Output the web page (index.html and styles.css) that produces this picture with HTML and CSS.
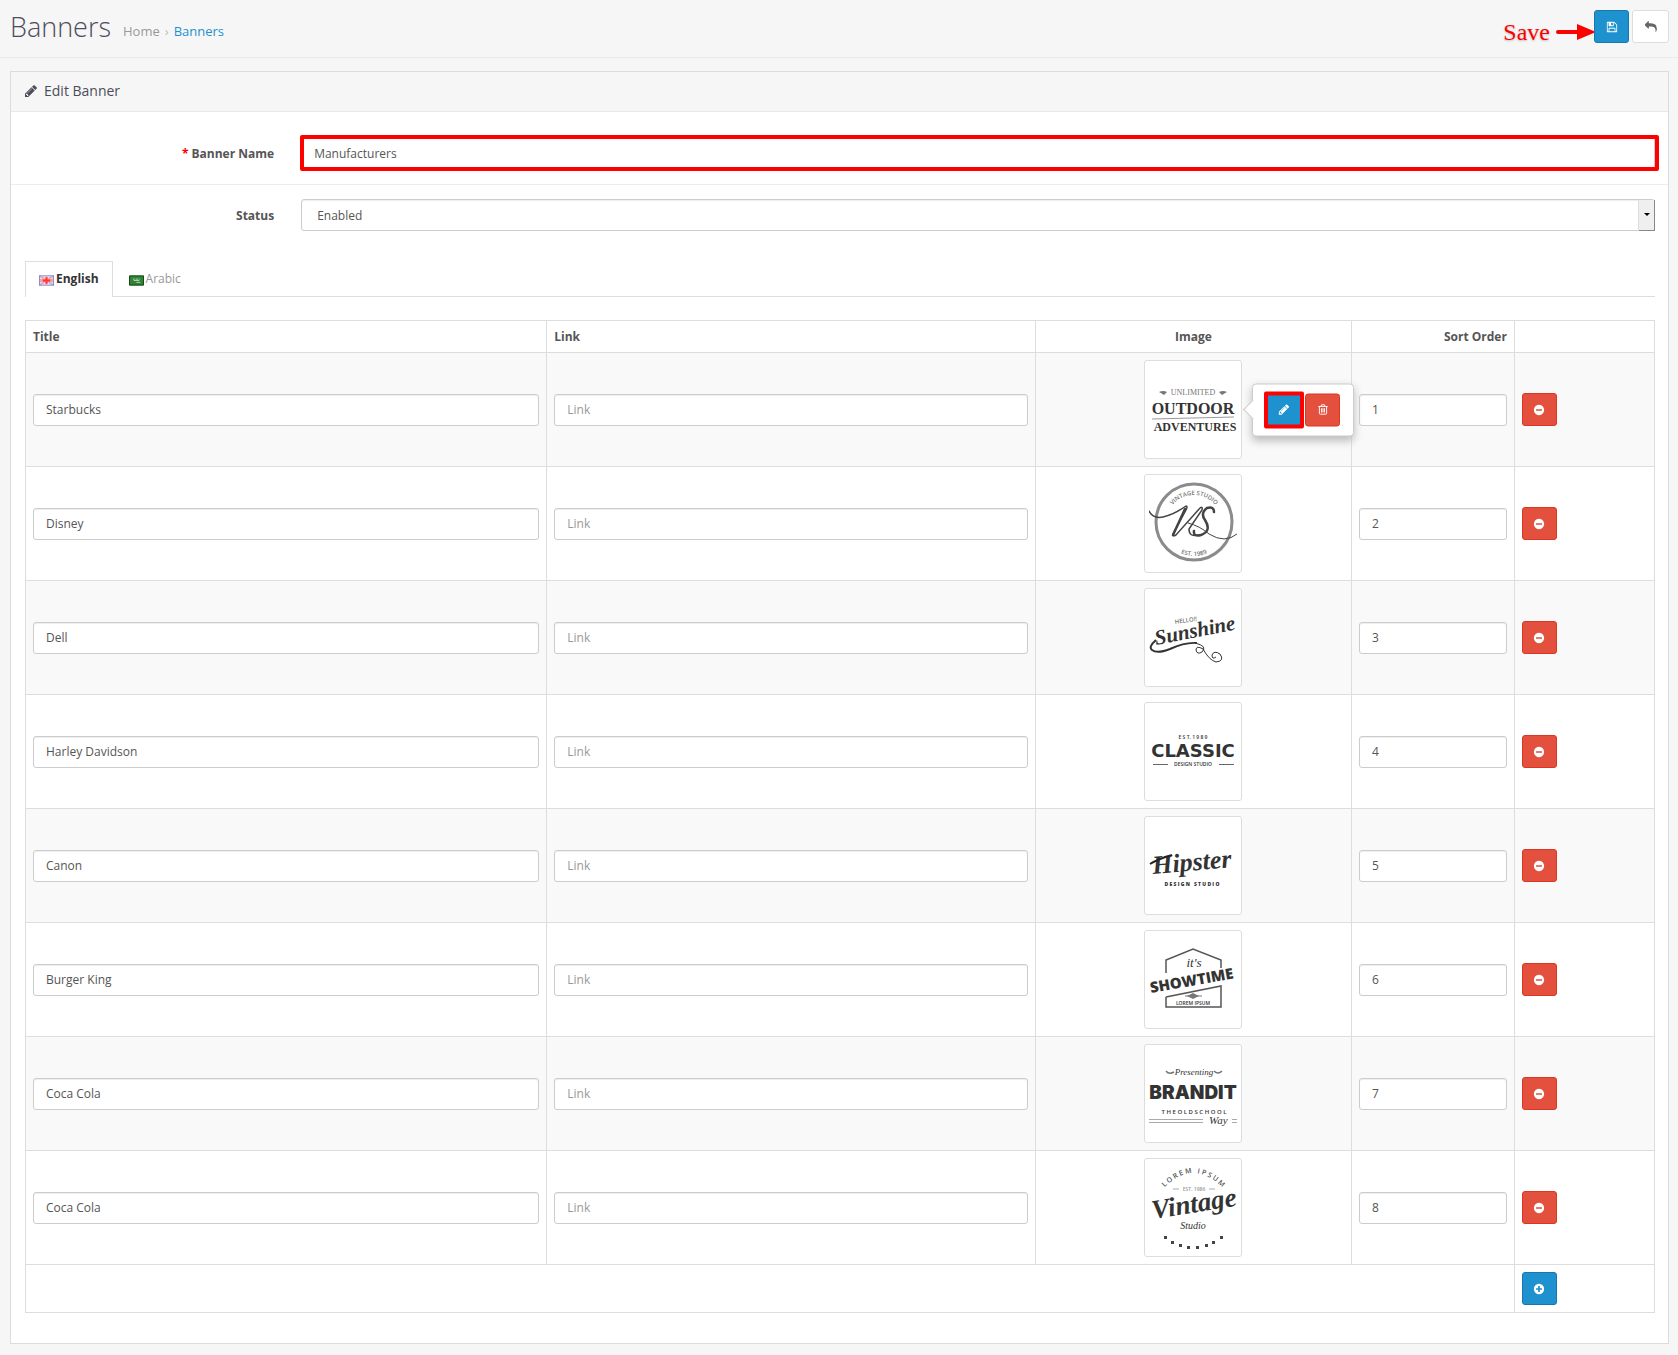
FILE: index.html
```html
<!DOCTYPE html>
<html lang="en">
<head>
<meta charset="utf-8">
<title>Banners</title>
<link rel="stylesheet" href="styles.css">
</head>
<body>
<svg class="sprite" aria-hidden="true">
  <symbol id="pencil" viewBox="0 0 1792 1792"><path d="M491 1536l91-91-235-235-91 91v107h128v128h107zm523-928q0-22-22-22-10 0-17 7l-542 542q-7 7-7 17 0 22 22 22 10 0 17-7l542-542q7-7 7-17zm-54-192l416 416-832 832h-416v-416zm683 96q0 53-37 90l-166 166-416-416 166-165q36-38 90-38 53 0 91 38l235 234q37 39 37 91z"/></symbol>
  <symbol id="save" viewBox="0 0 1792 1792"><path d="M512 1536h768v-384h-768v384zm896 0h128v-896q0-14-10-38.5t-20-34.5l-281-281q-10-10-34-20t-39-10v416q0 40-28 68t-68 28h-576q-40 0-68-28t-28-68v-416h-128v1280h128v-416q0-40 28-68t68-28h832q40 0 68 28t28 68v416zm-384-928v-320q0-13-9.500-22.500t-22.500-9.500h-192q-13 0-22.500 9.500t-9.500 22.500v320q0 13 9.500 22.500t22.500 9.500h192q13 0 22.500-9.500t9.500-22.500zm640 32v928q0 40-28 68t-68 28h-1344q-40 0-68-28t-28-68v-1344q0-40 28-68t68-28h928q40 0 88 20t76 48l280 280q28 28 48 76t20 88z"/></symbol>
  <symbol id="reply" viewBox="0 0 1792 1792"><path d="M1792 1120q0 166-127 451-3 7-10.500 24t-13.500 30-13 22q-12 17-28 17-15 0-23.500-10t-8.500-25q0-9 2.500-26.500t2.500-23.500q5-68 5-123 0-112-19.500-200.500t-54-153.500-89-112-118-77.500-147-48.500-169.500-25-184.500-7h-224v256q0 26-19 45t-45 19-45-19l-512-512q-19-19-19-45t19-45l512-512q19-19 45-19t45 19 19 45v256h224q713 0 875 403 53 134 53 333z"/></symbol>
  <symbol id="minus" viewBox="0 0 1792 1792"><path d="M1344 960v-128q0-26-19-45t-45-19h-768q-26 0-45 19t-19 45v128q0 26 19 45t45 19h768q26 0 45-19t19-45zm320-64q0 209-103 385.500t-279.500 279.500-385.500 103-385.500-103-279.500-279.500-103-385.500 103-385.500 279.500-279.500 385.500-103 385.500 103 279.500 279.500 103 385.500z"/></symbol>
  <symbol id="plus" viewBox="0 0 1792 1792"><path fill-rule="evenodd" d="M128 896a768 768 0 1 0 1536 0a768 768 0 1 0-1536 0zM768 448h256v320h320v256h-320v320h-256v-320h-320v-256h320z"/></symbol>
  <symbol id="trash" viewBox="0 0 14 14"><path fill="none" stroke="currentColor" stroke-width="1.100" d="M1.500 3.500h11M4.500 3.500l.8-2h3.400l.8 2M2.800 3.500v8q0 1 1 1h6.400q1 0 1-1v-8M5.300 5.500v5M7 5.500v5M8.700 5.500v5"/></symbol>
</svg>

<header class="page-header">
  <h1>Banners</h1>
  <nav class="breadcrumb" aria-label="Breadcrumb">
    <a href="#home">Home</a><span class="sep">›</span><a class="current" href="#banners">Banners</a>
  </nav>
  <div class="actions">
    <span class="save-note">Save
      <svg width="41" height="18" viewBox="0 0 41 18" aria-hidden="true"><path d="M3 9h22" stroke="#f00" stroke-width="4" stroke-linecap="round"/><path d="M22 1l19 8-19 8z" fill="#f00"/></svg>
    </span>
    <button class="btn primary" type="button" aria-label="Save banner"><svg class="icon"><use href="#save"/></svg></button>
    <button class="btn plain" type="button" aria-label="Cancel"><svg class="icon"><use href="#reply"/></svg></button>
  </div>
</header>

<main class="panel">
  <h2 class="panel-heading"><svg class="icon-large" aria-hidden="true"><use href="#pencil"/></svg>Edit Banner</h2>
  <form class="panel-body">
    <div class="form-row">
      <label for="name"><span class="required">*</span> Banner Name</label>
      <div class="field"><div class="marked"><input id="name" class="control" type="text" value="Manufacturers"></div></div>
    </div>
    <div class="form-row">
      <label for="status">Status</label>
      <div class="field"><div class="select-box"><select id="status" class="control"><option>Enabled</option><option>Disabled</option></select></div></div>
    </div>

    <div class="content">
      <nav class="tabs" aria-label="Languages">
        <a class="tab active" href="#english"><svg class="flag" viewBox="0 0 16 11" aria-hidden="true"><path fill="#fff" d="M0 0h16v11H0z"/><path fill="#d9d4ee" d="M1 1h5v3H1zM10 1h5v3h-5zM1 7h5v3H1zM10 7h5v3h-5z"/><path stroke="#e88" stroke-width="1" d="M0 0l16 11M16 0L0 11"/><path fill="none" stroke="#7c83cf" d="M.5.5h15v10H.5z"/><path stroke="#f9a2a2" stroke-width="3" d="M1 5.500h14M8 1v9"/><path stroke="#f33" stroke-width="2" d="M4 5.500h8M8 2v7"/></svg>English</a>
        <a class="tab" href="#arabic"><svg class="flag" viewBox="0 0 16 11" aria-hidden="true"><path fill="#2f8434" stroke="#103d12" d="M.5.5h15v10H.5z"/><path stroke="#b5d8b4" d="M4 4h2m1 0h3m1 0h1M5 5.500h6M8 7.500h4"/></svg>Arabic</a>
      </nav>

      <table class="banners">
        <colgroup><col class="c-title"><col class="c-link"><col class="c-image"><col class="c-sort"><col></colgroup>
        <thead>
          <tr><th>Title</th><th>Link</th><th class="center">Image</th><th class="right">Sort Order</th><th></th></tr>
        </thead>
        <tbody>
          <tr>
            <td><input class="control" type="text" aria-label="Title" value="Starbucks"></td>
            <td><input class="control" type="text" aria-label="Link" placeholder="Link"></td>
            <td>
              <div class="thumb-box">
                <a class="thumb" href="#image-1" aria-label="Unlimited Outdoor Adventures"><svg viewBox="0 0 88 88">
                  <path d="M10 27q4-2 8 0l-3 3q-3-2-5-3zM78 27q-4-2-8 0l3 3q3-2 5-3z" fill="#777"/>
                  <text class="serif mid" x="44" y="30" font-size="8" fill="#777">UNLIMITED</text>
                  <text class="serif bold mid" x="44" y="49" font-size="16">OUTDOOR</text>
                  <text class="serif bold mid" x="46" y="66" font-size="12">ADVENTURES</text>
                  <path d="M3 54l82-2" stroke="#999"/>
                </svg></a>
                <div class="popover">
                  <span class="marked-btn"><button class="btn primary" type="button" aria-label="Edit image"><svg class="icon"><use href="#pencil"/></svg></button></span>
                  <button class="btn danger" type="button" aria-label="Clear image"><svg class="icon"><use href="#trash"/></svg></button>
                </div>
              </div>
            </td>
            <td><input class="control" type="text" aria-label="Sort order" value="1"></td>
            <td><button class="btn danger" type="button" aria-label="Remove"><svg class="icon"><use href="#minus"/></svg></button></td>
          </tr>
          <tr>
            <td><input class="control" type="text" aria-label="Title" value="Disney"></td>
            <td><input class="control" type="text" aria-label="Link" placeholder="Link"></td>
            <td><div class="thumb-box"><a class="thumb" href="#image-2" aria-label="Vintage Studio"><svg viewBox="0 0 88 88">
              <defs><path id="arc-a" d="M17 44a28 28 0 0 1 56 0"/><path id="arc-b" d="M12 44a33 33 0 0 0 66 0"/></defs>
              <circle cx="45" cy="43" r="38" fill="none" stroke="#8b8b8b" stroke-width="3"/>
              <text class="sans" font-size="6" fill="#777"><textPath href="#arc-a" startOffset="50%" text-anchor="middle">VINTAGE STUDIO</textPath></text>
              <text class="sans" font-size="6" fill="#777"><textPath href="#arc-b" startOffset="50%" text-anchor="middle">EST. 1989</textPath></text>
              <g fill="none" stroke="#444" stroke-linecap="round"><path stroke-width="1.500" d="M0 32q4 8 14 6 10-2 23-11 2 0 0 4L24 55q-1 3 3 1L51 29q3-2 2 2L40 50q0 8 8 6"/><path stroke-width="2.500" d="M36 30L24 56M65 33q0-6-7-4-7 5-2 12 7 11-4 15-8 2-7-4"/><path d="M39 44q12 3 21 11 16 10 28 0"/></g>
            </svg></a></div></td>
            <td><input class="control" type="text" aria-label="Sort order" value="2"></td>
            <td><button class="btn danger" type="button" aria-label="Remove"><svg class="icon"><use href="#minus"/></svg></button></td>
          </tr>
          <tr>
            <td><input class="control" type="text" aria-label="Title" value="Dell"></td>
            <td><input class="control" type="text" aria-label="Link" placeholder="Link"></td>
            <td><div class="thumb-box"><a class="thumb" href="#image-3" aria-label="Hello Sunshine"><svg viewBox="0 0 88 88">
              <text class="sans" x="26" y="31" font-size="6" fill="#777" transform="rotate(-8 26 31)">HELLO!!</text>
              <text class="script" x="7" y="52" font-size="21" transform="rotate(-11 7 52)">Sunshine</text>
              <g fill="none" stroke="#333"><path stroke-width="2" d="M7 47q-8 7-4 10 5 4 18-1 15-7 27-6"/><path stroke-width="1" d="M46 50q13 3 7 9-5 3-6-2 0-5 7-1 6 11 13 13 9-1 4-8-6-4-8 1 0 5 4 2"/></g>
            </svg></a></div></td>
            <td><input class="control" type="text" aria-label="Sort order" value="3"></td>
            <td><button class="btn danger" type="button" aria-label="Remove"><svg class="icon"><use href="#minus"/></svg></button></td>
          </tr>
          <tr>
            <td><input class="control" type="text" aria-label="Title" value="Harley Davidson"></td>
            <td><input class="control" type="text" aria-label="Link" placeholder="Link"></td>
            <td><div class="thumb-box"><a class="thumb" href="#image-4" aria-label="Classic Design Studio"><svg viewBox="0 0 88 88">
              <text class="sans mid" x="44" y="32" font-size="5">E S T. 1 9 8 9</text>
              <text class="wide mid" x="44" y="50" font-size="18">CLASSIC</text>
              <text class="sans mid" x="44" y="59" font-size="5">DESIGN STUDIO</text>
              <path stroke="#666" d="M4 57.500h15M70 57.500h15"/>
            </svg></a></div></td>
            <td><input class="control" type="text" aria-label="Sort order" value="4"></td>
            <td><button class="btn danger" type="button" aria-label="Remove"><svg class="icon"><use href="#minus"/></svg></button></td>
          </tr>
          <tr>
            <td><input class="control" type="text" aria-label="Title" value="Canon"></td>
            <td><input class="control" type="text" aria-label="Link" placeholder="Link"></td>
            <td><div class="thumb-box"><a class="thumb" href="#image-5" aria-label="Hipster Design Studio"><svg viewBox="0 0 88 88">
              <text class="script" x="4" y="53" font-size="26" transform="rotate(-5 4 53)">Hipster</text>
              <path fill="none" stroke="#222" stroke-width="2" d="M1 43q8-5 22-9"/>
              <text class="sans heavy mid" x="43" y="65" font-size="5">D E S I G N &#160; S T U D I O</text>
            </svg></a></div></td>
            <td><input class="control" type="text" aria-label="Sort order" value="5"></td>
            <td><button class="btn danger" type="button" aria-label="Remove"><svg class="icon"><use href="#minus"/></svg></button></td>
          </tr>
          <tr>
            <td><input class="control" type="text" aria-label="Title" value="Burger King"></td>
            <td><input class="control" type="text" aria-label="Link" placeholder="Link"></td>
            <td><div class="thumb-box"><a class="thumb" href="#image-6" aria-label="It's Showtime"><svg viewBox="0 0 88 88">
              <path fill="none" stroke="#555" stroke-width="1.500" d="M17 38V25L44 14l28 11v8M17 62v10h55V51L17 62"/>
              <text class="script light mid" x="45" y="32" font-size="13">it's</text>
              <text class="sans heavy" x="2" y="58" font-size="15" transform="rotate(-10 2 58)">SHOWTIME</text>
              <path fill="#777" d="M38 61l6-3 6 3-6 3z"/><path stroke="#777" d="M36 61h17"/>
              <text class="sans mid" x="44" y="70" font-size="5">LOREM IPSUM</text>
            </svg></a></div></td>
            <td><input class="control" type="text" aria-label="Sort order" value="6"></td>
            <td><button class="btn danger" type="button" aria-label="Remove"><svg class="icon"><use href="#minus"/></svg></button></td>
          </tr>
          <tr>
            <td><input class="control" type="text" aria-label="Title" value="Coca Cola"></td>
            <td><input class="control" type="text" aria-label="Link" placeholder="Link"></td>
            <td><div class="thumb-box"><a class="thumb" href="#image-7" aria-label="Brandit"><svg viewBox="0 0 88 88">
              <text class="script light mid" x="45" y="26" font-size="9">Presenting</text>
              <path fill="none" stroke="#777" stroke-width="1.500" d="M17 22q3 4 8 1M73 22q-4 4-8 0"/>
              <text class="black mid" x="44" y="50" font-size="19">BRANDIT</text>
              <text class="sans mid" x="45" y="65" font-size="6">T H E O L D S C H O O L</text>
              <path stroke="#aaa" d="M0 70.500h54M0 73.500h54M83 70.500h5M83 73.500h5"/>
              <text class="script light" x="60" y="75" font-size="11">Way</text>
            </svg></a></div></td>
            <td><input class="control" type="text" aria-label="Sort order" value="7"></td>
            <td><button class="btn danger" type="button" aria-label="Remove"><svg class="icon"><use href="#minus"/></svg></button></td>
          </tr>
          <tr>
            <td><input class="control" type="text" aria-label="Title" value="Coca Cola"></td>
            <td><input class="control" type="text" aria-label="Link" placeholder="Link"></td>
            <td><div class="thumb-box"><a class="thumb" href="#image-8" aria-label="Vintage Studio"><svg viewBox="0 0 88 88">
              <defs><path id="arc-c" d="M13 27Q44-7 76 27"/></defs>
              <text class="sans" font-size="7" fill="#555"><textPath href="#arc-c" startOffset="50%" text-anchor="middle">L O R E M &#160; I P S U M</textPath></text>
              <text class="sans mid" x="45" y="28" font-size="5" fill="#999">EST. 1986</text><path stroke="#aaa" d="M24 26h6M60 26h6"/>
              <text class="script" x="4" y="56" font-size="27" transform="rotate(-9 4 56)">Vintage</text>
              <text class="script light mid" x="44" y="66" font-size="10">Studio</text>
              <path fill="#444" d="M15 73h3v3h-3zM22 78h3v3h-3zM30 81h3v3h-3zM38 83h3v3h-3zM47 83h3v3h-3zM56 81h3v3h-3zM63 78h3v3h-3zM71 73h3v3h-3z"/>
            </svg></a></div></td>
            <td><input class="control" type="text" aria-label="Sort order" value="8"></td>
            <td><button class="btn danger" type="button" aria-label="Remove"><svg class="icon"><use href="#minus"/></svg></button></td>
          </tr>
        </tbody>
        <tfoot>
          <tr><td colspan="4"></td><td><button class="btn primary" type="button" aria-label="Add banner"><svg class="icon"><use href="#plus"/></svg></button></td></tr>
        </tfoot>
      </table>
    </div>
  </form>
</main>
</body>
</html>
```
FILE: styles.css
```css
* { box-sizing: border-box; }
body {
  margin: 0;
  background: #f6f6f6;
  color: #555;
  font: 12px/17px "Open Sans", sans-serif;
}
a { color: inherit; text-decoration: none; }
.sprite { display: none; }
.icon { display: block; width: 12px; height: 12px; fill: currentColor; }
.icon-large { width: 14px; height: 14px; fill: currentColor; }

/* Page header */
.page-header {
  display: flex;
  align-items: center;
  height: 58px;
  padding: 0 9px 4px 10px;
  border-bottom: 1px solid #eaeaea;
}
h1 {
  margin: 0;
  color: #4c4d5a;
  font-size: 27px;
  font-weight: 300;
  line-height: 40px;
}
.breadcrumb {
  display: flex;
  gap: 5px;
  padding: 9px 0 0 12px;
  color: #999;
  font-size: 13px;
}
.breadcrumb .sep { color: #bbb; }
.breadcrumb .current { color: #1e91cf; }
.actions { display: flex; align-items: center; gap: 3px; margin-left: auto; }
.save-note {
  display: flex;
  align-items: center;
  gap: 5px;
  padding-top: 10px;
  margin-right: -5px;
  color: #f00;
  font: 24px/24px "Liberation Serif", serif;
  text-shadow: 0 1px 2px #bbb;
}

/* Buttons */
.btn {
  display: flex;
  align-items: center;
  justify-content: center;
  width: 35px;
  height: 33px;
  padding: 0;
  border: 1px solid;
  border-radius: 3px;
  color: #fff;
}
.primary { background: #1e91cf; border-color: #1978ab; }
.danger { background: #e3503e; border-color: #dc3522; }
.plain { width: 37px; background: #fff; border-color: #ddd; color: #666; }

/* Panel */
.panel {
  margin: 13px 9px 11px 10px;
  background: #fff;
  border: 1px solid #dcdcdc;
}
.panel-heading {
  display: flex;
  align-items: center;
  gap: 6px;
  height: 40px;
  margin: 0;
  padding: 0 13px 2px;
  background: #f6f6f6;
  border-bottom: 1px solid #e8e8e8;
  color: #4c4d5a;
  font-size: 14px;
  font-weight: 400;
}
.panel-body { padding: 10px 0 30px; }
.form-row {
  display: grid;
  grid-template-columns: 1fr 5fr;
  align-items: center;
  padding: 15px 0;
}
.form-row + .form-row { border-top: 1px solid #ededed; padding-top: 14px; }
.form-row label { padding-right: 13px; font-weight: 700; text-align: right; }
.required { color: #f00; }
.field { padding: 0 13px 0 14px; }
.control {
  display: block;
  width: 100%;
  height: 32px;
  padding: 0 12px;
  background: #fff;
  border: 1px solid #ccc;
  border-radius: 3px;
  box-shadow: inset 0 1px 1px #eee;
  color: #555;
  font: inherit;
}
.control::placeholder { color: #999; opacity: 1; }
.marked, .select-box { position: relative; }
.marked::after {
  content: "";
  position: absolute;
  inset: -2px -4px -2px -1px;
  border: 4px solid #f00;
  border-radius: 2px;
  pointer-events: none;
}
select.control { appearance: none; padding-left: 15px; }
.select-box::before {
  content: "";
  position: absolute;
  top: 1px;
  right: 0;
  bottom: 0;
  width: 15px;
  background: #efefef;
  border: 1px solid #888;
  border-width: 0 1px 1px 0;
  box-shadow: -1px 0 #ddd;
}
.select-box::after {
  content: "";
  position: absolute;
  top: 14px;
  right: 5px;
  border: 3px solid transparent;
  border-top-color: #000;
  border-bottom: 0;
}

/* Language tabs */
.content { padding: 15px 13px 0 14px; }
.tabs { display: flex; margin-bottom: 23px; border-bottom: 1px solid #ddd; }
.tab {
  display: flex;
  align-items: center;
  gap: 2px;
  height: 36px;
  margin-bottom: -1px;
  padding: 0 13px 2px;
  border: 1px solid transparent;
  border-bottom: 0;
  color: #999;
}
.tab.active { background: #fff; border-color: #ddd; color: #333; font-weight: 700; }
.tab:not(.active) { padding-left: 15px; }
.flag { width: 15px; height: 11px; margin-top: 3px; }

/* Banner table */
.banners { width: 100%; table-layout: fixed; border-collapse: collapse; }
.c-title { width: 32%; }
.c-link { width: 30%; }
.c-image { width: 19.4%; }
.c-sort { width: 10%; }
.banners th, .banners td { padding: 7px; border: 1px solid #ddd; }
.banners th { text-align: left; }
.banners th.center { text-align: center; }
.banners th.right { text-align: right; }
.banners tbody tr { height: 114px; }
.banners tbody tr:nth-child(odd) { background: #f9f9f9; }
.thumb-box { position: relative; width: 98px; margin: 0 auto; }
.thumb {
  display: block;
  height: 99px;
  padding: 4px;
  background: #fff;
  border: 1px solid #ddd;
  border-radius: 3px;
}
.thumb svg { display: block; fill: #333; }
.mid { text-anchor: middle; }
.sans { font-family: "Open Sans", sans-serif; font-weight: 600; }
.serif { font-family: "Liberation Serif", serif; }
.script { font-family: "Liberation Serif", serif; font-style: italic; font-weight: 700; }
.wide { font-family: "DejaVu Sans", sans-serif; font-weight: 700; }
.black { font-family: Inter, sans-serif; font-weight: 900; }
.bold { font-weight: 700; }
.heavy { font-weight: 800; }
.light { font-weight: 400; }

/* Image popover */
.popover {
  position: absolute;
  top: 50%;
  left: 108px;
  z-index: 1;
  display: flex;
  gap: 4px;
  padding: 9px 13px;
  background: #fff;
  border: 1px solid #ccc;
  border-radius: 4px;
  box-shadow: 0 4px 9px #bbb;
  transform: translateY(-50%);
}
.popover::before {
  content: "";
  position: absolute;
  top: 50%;
  left: -7px;
  width: 13px;
  height: 13px;
  margin-top: -7px;
  background: #fff;
  border: 1px solid #ccc;
  border-width: 0 0 1px 1px;
  transform: rotate(45deg);
}
.marked-btn { position: relative; }
.marked-btn::after {
  content: "";
  position: absolute;
  inset: -2px -3px -2px -2px;
  border: 4px solid #f00;
  border-radius: 2px;
  pointer-events: none;
}
```
